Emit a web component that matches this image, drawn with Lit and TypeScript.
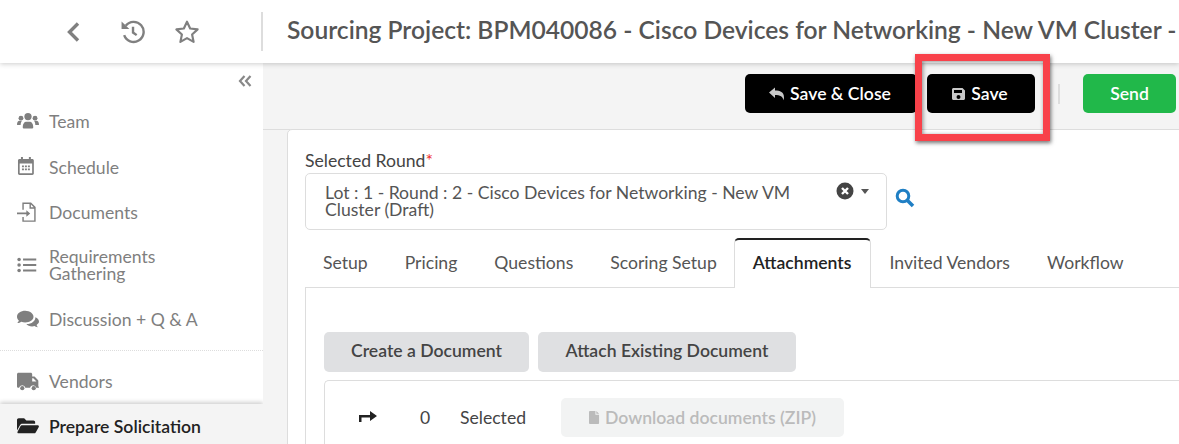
import { LitElement, css, html, svg } from "lit";
import { customElement } from "lit/decorators.js";

const icons = {
  team: svg`<circle cx="10" cy="5" r="3.300"/><circle cx="3.600" cy="6.400" r="2.200"/><circle cx="16.400" cy="6.400" r="2.200"/><path d="M5.200 14.600c0-3.300 1.600-5 3-5h3.600c1.400 0 3 1.700 3 5 0 .8-.6 1.200-1.200 1.200H6.400c-.6 0-1.200-.4-1.200-1.200zM0 12.200c0-2 1-3.400 2.200-3.400h2.400c-.8 1-1.200 2.100-1.300 3.900H.6c-.4 0-.6-.2-.6-.5zM20 12.200c0-2-1-3.400-2.200-3.400h-2.400c.8 1 1.200 2.100 1.300 3.900h2.700c.4 0 .6-.2.600-.5z"/>`,
  calendar: svg`<g transform="scale(.9)"><path fill-rule="evenodd" d="M4 0h2v2h6V0h2v2h1.500c.8 0 1.500.7 1.500 1.500v13c0 .8-.7 1.500-1.500 1.500h-13C1.700 18 1 17.300 1 16.500v-13C1 2.700 1.700 2 2.500 2H4zM2.700 6.500v9.800h12.600V6.500z"/><path d="M5 8.500h2v1.700H5zM8 8.500h2v1.700H8zM11 8.500h2v1.700h-2zM5 11.500h2v1.700H5zM8 11.500h2v1.700H8zM11 11.500h2v1.700h-2z"/></g>`,
  doc: svg`<path fill="none" stroke="currentColor" stroke-width="1.300" d="M5.500 7V1h7l3.800 3.800V17.300H5.500V13.500M12 1.300v4h4"/><path d="M0 9.500h8.500V7.300l3.500 3-3.500 3v-2.300H0z"/>`,
  list: svg`<circle cx="1.900" cy="4" r="1.600"/><circle cx="1.900" cy="9" r="1.600"/><circle cx="1.900" cy="14" r="1.600"/><path d="M5.500 3h12v2h-12zM5.500 8h12v2h-12zM5.500 13h12v2h-12z"/>`,
  chat: svg`<path d="M7.500 1.500C3.400 1.500 0 3.900 0 6.900c0 1.300.6 2.500 1.700 3.400-.3.900-.9 1.700-1.500 2.300 1.500 0 2.800-.5 3.700-1.200 1.100.5 2.300.7 3.600.7 4.100 0 7.500-2.400 7.500-5.200S11.600 1.500 7.500 1.500z"/><path d="M20 11.500c0-1.800-1.300-3.300-3.300-4.100.1 3.500-3.500 6.300-8.200 6.200 1 1.300 3 2.200 5.200 2.200.8 0 1.600-.1 2.300-.4.700.6 1.700 1 3 1-.5-.5-1-1.200-1.200-1.900.8-.8 2.200-1.800 2.200-3z"/>`,
  truck: svg`<path fill-rule="evenodd" d="M1.400 1.500h11.100c.7 0 1.300.6 1.300 1.300V5h1.600c.4 0 .7.100 1 .4l2.600 2.600c.3.300.4.600.4 1V14c.4 0 .6.300.6.600s-.2.600-.6.600h-1.900a2.900 2.900 0 0 0-5.700 0H7.600a2.900 2.900 0 0 0-5.700 0h-.5C.6 15.200 0 14.600 0 13.900V2.800C0 2.100.6 1.500 1.400 1.500zm12.400 5v3h3.900l-2.900-3z"/><circle cx="4.800" cy="15.500" r="1.900"/><circle cx="15.200" cy="15.500" r="1.900"/>`,
  folder: svg`<path d="M0 3.500C0 2.700.7 2 1.500 2h5l2 2H15c.8 0 1.500.7 1.500 1.500V7H5c-1 0-1.700.4-2.200 1.200L0 13z"/><path d="M4.400 8.400h14.500c.8 0 1.300.8.900 1.500l-2.800 5c-.3.500-.8.800-1.400.8H1.300c-.8 0-1.200-.8-.8-1.400l2.600-5c.3-.5.700-.9 1.300-.9z"/>`,
};

@customElement("app-root")
export class AppRoot extends LitElement {
  navItem(icon: unknown, label: unknown, cls = "") {
    return html`<div class="nav-item ${cls}">
      <svg class="nav-icon" viewBox="0 0 20 18" fill="currentColor">${icon}</svg>
      <span>${label}</span>
    </div>`;
  }

  render() {
    return html`
      <header class="topbar">
        <div class="top-icons">
          <svg class="ic back" viewBox="0 0 14 22"><path d="M12 2.500 3.500 11l8.500 8.500" fill="none" stroke="currentColor" stroke-width="3.400"/></svg>
          <svg class="ic hist" viewBox="0 0 24 24" fill="none" stroke="currentColor" stroke-width="2.300">
            <path d="M5.500 6.500A9.600 9.600 0 1 1 4 15.500"/>
            <path d="M12.500 7.500v5.500l3.500 2.500"/>
            <path d="M1.500 2.500 9 9.500H1.500z" fill="currentColor" stroke="none"/>
          </svg>
          <svg class="ic star" viewBox="0 0 24 24"><path d="M12 2.500l2.900 6.300 6.900.8-5.100 4.700 1.400 6.800L12 17.600l-6.100 3.500 1.400-6.800L2.200 9.600l6.900-.8z" fill="none" stroke="currentColor" stroke-width="2" stroke-linejoin="round"/></svg>
        </div>
        <div class="title">Sourcing Project: BPM040086 - Cisco Devices for Networking - New VM Cluster -</div>
      </header>
      <div class="body">
        <aside class="sidebar">
          <div class="collapse">
            <svg viewBox="0 0 14 12" width="14" height="12"><path d="M6.500 1 2 6l4.500 5M12.500 1 8 6l4.500 5" fill="none" stroke="currentColor" stroke-width="2.200"/></svg>
          </div>
          ${this.navItem(icons.team, "Team", "first")}
          ${this.navItem(icons.calendar, "Schedule")}
          ${this.navItem(icons.doc, "Documents")}
          ${this.navItem(icons.list, html`Requirements<br />Gathering`, "two-line")}
          ${this.navItem(icons.chat, "Discussion + Q & A")}
          <div class="nav-divider"></div>
          ${this.navItem(icons.truck, "Vendors")}
          ${this.navItem(icons.folder, "Prepare Solicitation", "active")}
        </aside>
        <main class="main">
          <div class="toolbar">
            <button class="btn black wide">
              <svg viewBox="0 0 16 14" width="16" height="14" fill="#c8c8c8"><path d="M0 5.500 6 .5v3c5 0 9 1.500 9 7 0 1-.3 1.900-.8 2.700.1-3.400-3.200-5.200-8.200-5.200v3z"/></svg>
              Save &amp; Close
            </button>
            <button class="btn black save">
              <svg viewBox="0 0 14 14" width="14" height="14" fill="#c8c8c8"><path fill-rule="evenodd" d="M1.500 1h9L13 3.500v8c0 .8-.7 1.500-1.500 1.500h-10C.7 13 0 12.300 0 11.500v-9C0 1.700.7 1 1.500 1zM2 3v3h8V3zm4.500 5a2 2 0 1 0 0 4 2 2 0 0 0 0-4z"/></svg>
              Save
            </button>
            <span class="tool-sep"></span>
            <button class="btn green">Send</button>
          </div>
          <section class="card">
            <label class="field-label">Selected Round<span class="req">*</span></label>
            <div class="select-row">
              <div class="select">
                <div class="select-text">Lot : 1 - Round : 2 - Cisco Devices for Networking - New VM Cluster (Draft)</div>
                <svg class="clear" viewBox="0 0 18 18" width="18" height="18"><circle cx="9" cy="9" r="8.500" fill="#444"/><path d="m6 6 6 6m0-6-6 6" stroke="#fff" stroke-width="2.400"/></svg>
                <span class="caret"></span>
              </div>
              <svg class="search" viewBox="0 0 20 20" width="20" height="20"><circle cx="8" cy="8" r="5.800" fill="none" stroke="currentColor" stroke-width="3"/><path d="m12.500 12.500 5.500 5.500" stroke="currentColor" stroke-width="3.600"/></svg>
            </div>
            <nav class="tabs">
              <span class="tab">Setup</span>
              <span class="tab">Pricing</span>
              <span class="tab">Questions</span>
              <span class="tab">Scoring Setup</span>
              <span class="tab active">Attachments</span>
              <span class="tab">Invited Vendors</span>
              <span class="tab">Workflow</span>
            </nav>
            <div class="panel">
              <div class="panel-actions">
                <button class="btn gray create">Create a Document</button>
                <button class="btn gray attach">Attach Existing Document</button>
              </div>
              <div class="docs">
                <svg class="arrow" viewBox="0 0 20 14" width="20" height="14" fill="#222"><path d="M1 13V6h11V2l7 5-7 5V8.500H3.500V13z"/></svg>
                <span class="count">0</span>
                <span class="selected">Selected</span>
                <button class="btn zip">
                  <svg viewBox="0 0 12 14" width="11" height="13" fill="#bbb"><path d="M1 0h6v4h4v9a1 1 0 0 1-1 1H1a1 1 0 0 1-1-1V1a1 1 0 0 1 1-1zM8 0l3 3H8z"/></svg>
                  Download documents (ZIP)
                </button>
              </div>
            </div>
          </section>
        </main>
      </div>
      <div class="callout"></div>
    `;
  }

  static styles = css`
    :host {
      display: block;
      position: relative;
      width: 1179px;
      height: 444px;
      overflow: hidden;
      font-family: Lato, "Open Sans", sans-serif;
      font-size: 17.600px;
      color: #555;
      background: #fff;
    }

    .topbar {
      position: relative;
      z-index: 2;
      height: 63px;
      display: flex;
      align-items: center;
      background: #fff;
      box-shadow: 0 1px 5px rgba(0, 0, 0, 0.2);
    }
    .top-icons {
      width: 263px;
      height: 39px;
      box-sizing: border-box;
      display: flex;
      align-items: center;
      padding-left: 66px;
      border-right: 2px solid #ddd;
      color: #808080;
    }
    .ic {
      display: block;
    }
    .back {
      width: 14px;
      height: 22px;
    }
    .hist {
      width: 25px;
      height: 25px;
      margin-left: 40px;
    }
    .star {
      width: 26px;
      height: 26px;
      margin-left: 29px;
    }
    .title {
      margin: -4px 0 0 24px;
      white-space: nowrap;
      overflow: hidden;
      flex: 1;
      font-size: 24.600px;
      font-weight: 600;
      color: #555;
    }

    .body {
      display: flex;
      height: 381px;
    }
    .sidebar {
      width: 263px;
      flex: none;
      background: #fff;
      color: #7f7f7f;
    }
    .collapse {
      height: 36px;
      display: flex;
      justify-content: flex-end;
      align-items: flex-start;
      padding: 12px 11px 0 0;
      box-sizing: border-box;
      color: #888;
    }
    .nav-item {
      display: flex;
      align-items: center;
      padding: 14px 0 14px 17px;
      line-height: 17px;
    }
    .nav-item.first {
      padding-bottom: 15px;
    }
    .nav-item.two-line {
      padding-top: 13px;
      padding-bottom: 15px;
    }
    .nav-icon {
      width: 22px;
      height: 20px;
      flex: none;
      margin: -2px 10px -1px 0;
      overflow: visible;
    }
    .nav-divider {
      margin-top: 8px;
      margin-bottom: 8px;
      border-top: 1px dotted #ddd;
    }
    .nav-item.active {
      background: #f4f4f4;
      color: #222;
      font-weight: 600;
      box-shadow: 0 -2px 4px rgba(0, 0, 0, 0.18);
    }

    .main {
      flex: 1;
      min-width: 0;
      background: #f4f4f4;
    }
    .toolbar {
      height: 67px;
      box-sizing: border-box;
      display: flex;
      justify-content: flex-end;
      align-items: flex-start;
      padding: 11px 3px 0 0;
      border-bottom: 1px solid #ddd;
    }
    .btn {
      font: inherit;
      font-weight: 600;
      border: 0;
      border-radius: 5px;
      height: 39px;
      display: inline-flex;
      align-items: center;
      justify-content: center;
      gap: 5px;
      padding: 0;
    }
    .black {
      background: #000;
      color: #fff;
    }
    .wide {
      width: 172px;
      margin-right: 10px;
      padding-right: 2px;
    }
    .save {
      width: 108px;
      padding-right: 2px;
    }
    .tool-sep {
      width: 2px;
      height: 20px;
      margin: 10px 23px 0;
      background: #ddd;
    }
    .green {
      width: 93px;
      background: #21b84a;
      color: #fff;
    }

    .card {
      margin: -1px -10px 0 24px;
      height: 400px;
      box-sizing: border-box;
      background: #fff;
      border: 1px solid #ddd;
      border-radius: 5px 0 0 0;
      padding: 21px 0 0 17px;
    }
    .field-label {
      display: block;
      line-height: 20px;
      color: #444;
    }
    .req {
      color: #e33;
    }
    .select-row {
      display: flex;
      align-items: center;
      margin-top: 2px;
    }
    .select {
      width: 582px;
      height: 57px;
      box-sizing: border-box;
      border: 1px solid #ddd;
      border-radius: 5px;
      padding: 10px 19px 0;
      display: flex;
      align-items: flex-start;
    }
    .select-text {
      width: 490px;
      line-height: 17px;
      color: #555;
      flex: none;
    }
    .clear {
      margin-left: 21px;
      margin-top: -2px;
      flex: none;
    }
    .caret {
      margin: 5px 0 0 7px;
      border: 4px solid transparent;
      border-top: 5px solid #555;
      border-bottom: 0;
    }
    .search {
      margin: 0 0 8px 8px;
      color: #1f7fc4;
    }

    .tabs {
      display: flex;
      height: 50px;
      gap: 1px;
      margin-top: 8px;
      box-sizing: border-box;
    }
    .tab {
      padding: 0 18px;
      line-height: 49px;
      height: 49px;
      box-sizing: border-box;
      color: #555;
    }
    .tab.active {
      position: relative;
      z-index: 1;
      background: #fff;
      color: #222;
      font-weight: 600;
      height: 50px;
      line-height: 46px;
      margin: 0 -1px 0 -2px;
      padding-right: 19px;
      border: 1px solid #ddd;
      border-top: 2px solid #222;
      border-bottom: 0;
      border-radius: 5px 5px 0 0;
    }
    .panel {
      border-top: 1px solid #ddd;
      border-left: 1px solid #ddd;
      margin-top: -1px;
      padding: 44px 0 0 18px;
    }
    .panel-actions {
      display: flex;
      gap: 9px;
    }
    .gray {
      height: 40px;
      padding-bottom: 3px;
      background: #dfe0e2;
      color: #444;
    }
    .create {
      width: 205px;
    }
    .attach {
      width: 258px;
    }
    .docs {
      margin-top: 8px;
      height: 80px;
      border: 1px solid #ddd;
      border-right: 0;
      border-radius: 5px 0 0 0;
      display: flex;
      align-items: flex-start;
      color: #444;
    }
    .arrow {
      margin: 28px 0 0 33px;
    }
    .count {
      margin: 26px 0 0 42px;
      width: 40px;
    }
    .selected {
      margin-top: 26px;
      width: 101px;
    }
    .btn.zip {
      width: 283px;
      margin-top: 17px;
      background: #f2f3f3;
      color: #bbb;
    }

    .callout {
      position: absolute;
      left: 915px;
      top: 54px;
      width: 135px;
      height: 87px;
      box-sizing: border-box;
      border: 7px solid #f8414a;
      box-shadow: 1px 2px 4px rgba(0, 0, 0, 0.55), inset 1px 1px 4px rgba(0, 0, 0, 0.45);
      z-index: 3;
    }
  `;
}
